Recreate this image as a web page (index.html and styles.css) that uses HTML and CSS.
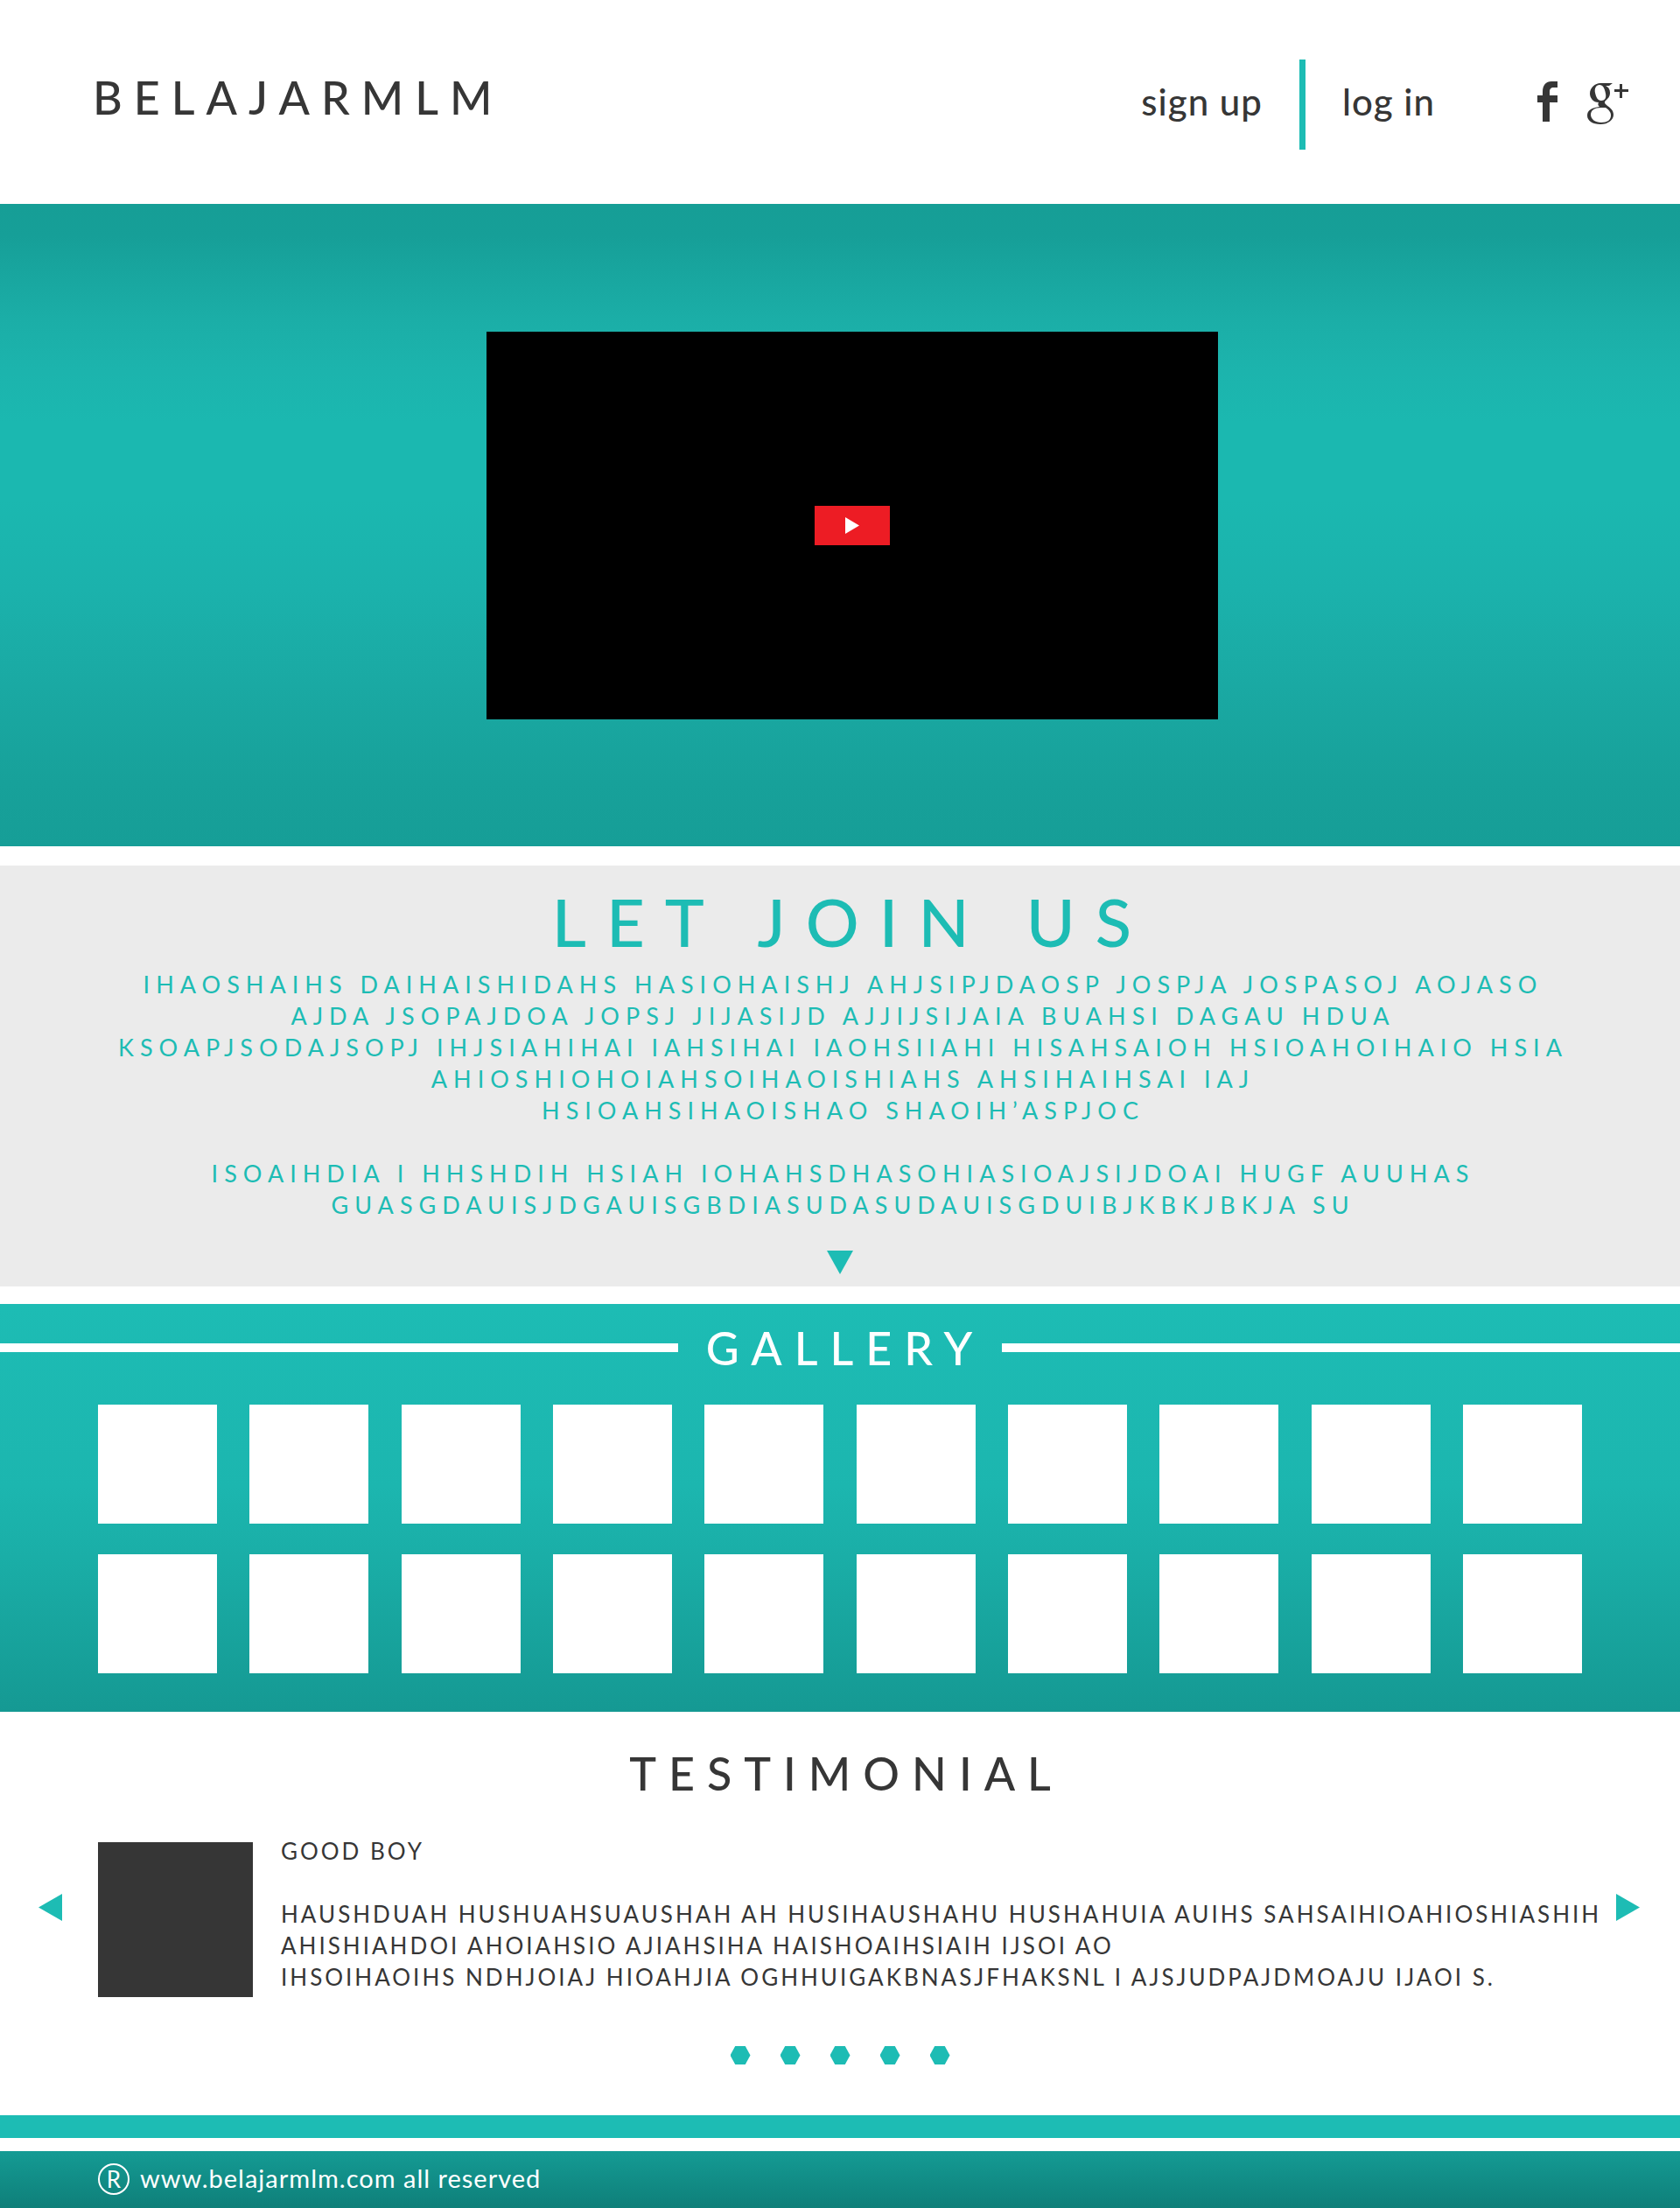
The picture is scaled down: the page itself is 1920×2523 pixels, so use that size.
FILE: index.html
```html
<!DOCTYPE html>
<html lang="id">
<head>
<meta charset="utf-8">
<meta name="viewport" content="width=device-width, initial-scale=1">
<title>Belajarmlm</title>
<link rel="stylesheet" href="styles.css">
</head>
<body>
<header class="site-header">
  <a class="logo" href="#">BELAJARMLM</a>
  <nav class="account">
    <a class="account-link" href="#">sign up</a>
    <span class="account-divider"></span>
    <a class="account-link" href="#">log in</a>
  </nav>
  <div class="social">
    <a class="social-link" href="#" aria-label="Facebook">
      <svg width="24" height="48" viewBox="0 0 24 48"><path fill="#363636" d="M6 47V25H0v-8h6v-4C6 5 10 1 16 1h7v7h-4c-4 0-5 2-5 5v4h9v8h-9v22z"/></svg>
    </a>
    <a class="social-link" href="#" aria-label="Google Plus">
      <svg width="48" height="50" viewBox="0 0 48 50"><g fill="#363636"><path fill-rule="evenodd" d="M15 3h14l-4 3h-4c4 2 5 5 5 8 0 5-3 7-5 9-2 2-1 3 1 5 4 3 8 6 8 11 0 6-6 11-15 11C6 50 0 46 0 40c0-6 5-9 14-10-2-2-2-3-1-5C7 25 3 20 3 15 3 8 9 3 15 3zm-1 2c-4 0-6 4-5 9 1 5 3 9 7 9s6-3 5-8c-1-6-3-10-7-10zm2 26C8 31 4 34 4 39c0 5 5 9 12 9s11-3 11-8c0-4-2-6-6-9z"/><path d="M37 4h3v6h7v3h-7v7h-3v-7h-6v-3h6z"/></g></svg>
    </a>
  </div>
</header>
<main>
  <section class="hero">
    <div class="video">
      <button class="play" type="button" aria-label="Play video">
        <svg width="16" height="19" viewBox="0 0 16 19"><path fill="#fff" d="M0 0l16 9.500L0 19z"/></svg>
      </button>
    </div>
  </section>
  <section class="join">
    <h1 class="join-title">LET JOIN US</h1>
    <p class="join-text">IHAOSHAIHS DAIHAISHIDAHS HASIOHAISHJ AHJSIPJDAOSP JOSPJA JOSPASOJ AOJASO<br>AJDA JSOPAJDOA JOPSJ JIJASIJD AJJIJSIJAIA BUAHSI DAGAU HDUA<br>KSOAPJSODAJSOPJ IHJSIAHIHAI IAHSIHAI IAOHSIIAHI HISAHSAIOH HSIOAHOIHAIO HSIA<br>AHIOSHIOHOIAHSOIHAOISHIAHS AHSIHAIHSAI IAJ<br>HSIOAHSIHAOISHAO SHAOIH’ASPJOC</p>
    <p class="join-text">ISOAIHDIA I HHSHDIH HSIAH IOHAHSDHASOHIASIOAJSIJDOAI HUGF AUUHAS<br>GUASGDAUISJDGAUISGBDIASUDASUDAUISGDUIBJKBKJBKJA SU</p>
    <button class="arrow arrow-down" type="button" aria-label="Scroll down">
      <svg width="30" height="27" viewBox="0 0 30 27"><path fill="#1dbcb4" d="M0 0h30L15 27z"/></svg>
    </button>
  </section>
  <section class="gallery">
    <h2 class="gallery-title">GALLERY</h2>
    <div class="gallery-grid">
      <a class="tile" href="#"></a><a class="tile" href="#"></a><a class="tile" href="#"></a><a class="tile" href="#"></a><a class="tile" href="#"></a>
      <a class="tile" href="#"></a><a class="tile" href="#"></a><a class="tile" href="#"></a><a class="tile" href="#"></a><a class="tile" href="#"></a>
      <a class="tile" href="#"></a><a class="tile" href="#"></a><a class="tile" href="#"></a><a class="tile" href="#"></a><a class="tile" href="#"></a>
      <a class="tile" href="#"></a><a class="tile" href="#"></a><a class="tile" href="#"></a><a class="tile" href="#"></a><a class="tile" href="#"></a>
    </div>
  </section>
  <section class="testimonial">
    <h2 class="testimonial-title">TESTIMONIAL</h2>
    <div class="slider">
      <button class="arrow" type="button" aria-label="Previous">
        <svg width="27" height="31" viewBox="0 0 27 31"><path fill="#1dbcb4" d="M27 0v31L0 15.500z"/></svg>
      </button>
      <article class="slide">
        <div class="avatar"></div>
        <div class="quote">
          <h3 class="quote-name">GOOD BOY</h3>
          <p class="quote-text">HAUSHDUAH HUSHUAHSUAUSHAH AH HUSIHAUSHAHU HUSHAHUIA AUIHS SAHSAIHIOAHIOSHIASHIH<br>AHISHIAHDOI AHOIAHSIO AJIAHSIHA HAISHOAIHSIAIH IJSOI AO<br>IHSOIHAOIHS NDHJOIAJ HIOAHJIA OGHHUIGAKBNASJFHAKSNL I AJSJUDPAJDMOAJU IJAOI S.</p>
        </div>
      </article>
      <button class="arrow" type="button" aria-label="Next">
        <svg width="27" height="31" viewBox="0 0 27 31"><path fill="#1dbcb4" d="M0 0l27 15.500L0 31z"/></svg>
      </button>
    </div>
    <div class="dots">
      <button class="dot" type="button" aria-label="Slide 1"></button>
      <button class="dot" type="button" aria-label="Slide 2"></button>
      <button class="dot" type="button" aria-label="Slide 3"></button>
      <button class="dot" type="button" aria-label="Slide 4"></button>
      <button class="dot" type="button" aria-label="Slide 5"></button>
    </div>
  </section>
</main>
<footer class="site-footer">
  <span class="registered">R</span>
  <span class="footer-text">www.belajarmlm.com all reserved</span>
</footer>
</body>
</html>
```
FILE: styles.css
```css
:root {
  --teal: #1dbcb4;
  --ink: #363636;
  --gutter: 112px;
}

* {
  box-sizing: border-box;
}

body,
h1,
h2,
h3,
p {
  margin: 0;
  font-weight: 400;
}

body {
  font-family: Lato, "Open Sans", sans-serif;
  color: var(--ink);
  background: #fff;
}

a {
  color: inherit;
  text-decoration: none;
}

button {
  padding: 0;
  border: 0;
  background: none;
  cursor: pointer;
}

svg {
  display: block;
}

.logo,
.account-link,
.join-title,
.gallery-title,
.testimonial-title {
  font-weight: 500;
}

.site-header {
  display: flex;
  align-items: center;
  height: 233px;
  padding: 0 58px 0 106px;
}

.logo {
  margin: 0 auto 12px 0;
  font-size: 52px;
  line-height: 64px;
  letter-spacing: 13px;
}

.account {
  display: flex;
  align-items: center;
  gap: 42px;
  padding-top: 6px;
}

.account-link {
  margin-bottom: 8px;
  font-size: 42px;
  line-height: 48px;
  letter-spacing: 1px;
}

.account-divider {
  width: 7px;
  height: 103px;
  background: var(--teal);
}

.social {
  display: flex;
  gap: 33px;
  margin-left: 117px;
}

.hero {
  display: flex;
  justify-content: center;
  padding: 146px 0 145px 28px;
  background: linear-gradient(#169e96, #169f98 5%, #1baea7 18%, #1cb4ad 26%, #1bb8b0 34%, #1bb8b0 46%, #1bb2ac 60%, #1aa9a3 75%, #17a19a 90%, #169e97);
}

.video {
  display: flex;
  align-items: center;
  justify-content: center;
  width: 836px;
  height: 443px;
  background: #000;
}

.play {
  display: flex;
  align-items: center;
  justify-content: center;
  width: 86px;
  height: 45px;
  background: #ed1c24;
}

.join {
  display: flex;
  flex-direction: column;
  align-items: center;
  margin: 22px 0 20px;
  padding: 14px 0;
  background: #ebebeb;
  color: var(--teal);
  text-align: center;
}

.join-title {
  margin-bottom: 4px;
  padding-left: 27px;
  font-size: 76px;
  line-height: 100px;
  letter-spacing: 23px;
}

.join-text {
  margin-bottom: 36px;
  padding-left: 7px;
  font-size: 27px;
  line-height: 36px;
  letter-spacing: 7px;
}

.join-text:last-of-type {
  margin-bottom: 34px;
}

.gallery {
  padding: 20px 0 44px;
  background: linear-gradient(#1dbcb4, #1cb6af 45%, #1aaea7 62%, #159993);
}

.gallery-title {
  display: flex;
  align-items: center;
  gap: 20px;
  color: #fff;
  font-size: 52px;
  line-height: 60px;
  letter-spacing: 14px;
}

.gallery-title::before,
.gallery-title::after {
  content: "";
  flex: 1;
  height: 10px;
  background: #fff;
}

.gallery-title::before {
  margin-right: 12px;
}

.gallery-grid {
  display: grid;
  grid-template-columns: repeat(10, 136px);
  justify-content: space-between;
  row-gap: 35px;
  padding: 35px var(--gutter) 0;
}

.tile {
  height: 136px;
  background: #fff;
}

.testimonial {
  padding: 38px 0 58px;
}

.testimonial-title {
  padding-left: 14px;
  font-size: 52px;
  line-height: 64px;
  letter-spacing: 14px;
  text-align: center;
}

.slider {
  display: flex;
  justify-content: space-between;
  padding: 47px 46px 0 44px;
}

.slider .arrow {
  align-self: flex-start;
  margin-top: 59px;
}

.slide {
  display: flex;
  flex: 1;
  gap: 32px;
  height: 177px;
  padding-left: 41px;
}

.avatar {
  width: 177px;
  background: var(--ink);
}

.quote {
  margin-top: -8px;
}

.quote-name,
.quote-text {
  font-size: 26px;
  line-height: 36px;
  letter-spacing: 3px;
  white-space: nowrap;
}

.quote-name {
  margin-bottom: 36px;
}

.dots {
  display: flex;
  justify-content: center;
  gap: 34px;
  padding-top: 56px;
}

.dot {
  width: 23px;
  height: 21px;
  background: var(--teal);
  clip-path: polygon(25% 0, 75% 0, 100% 50%, 75% 100%, 25% 100%, 0 50%);
}

.site-footer {
  display: flex;
  align-items: center;
  gap: 12px;
  height: 106px;
  padding: 40px var(--gutter) 0;
  background:
    linear-gradient(var(--teal), var(--teal)) top / 100% 26px no-repeat,
    linear-gradient(#149b94, #0f7f79) bottom / 100% 65px no-repeat;
  color: #fff;
}

.registered {
  width: 36px;
  height: 36px;
  border: 2px solid #fff;
  border-radius: 50%;
  font-size: 26px;
  line-height: 32px;
  text-align: center;
}

.footer-text {
  margin-bottom: 2px;
  font-size: 29px;
  line-height: 36px;
  letter-spacing: 1px;
}
```
